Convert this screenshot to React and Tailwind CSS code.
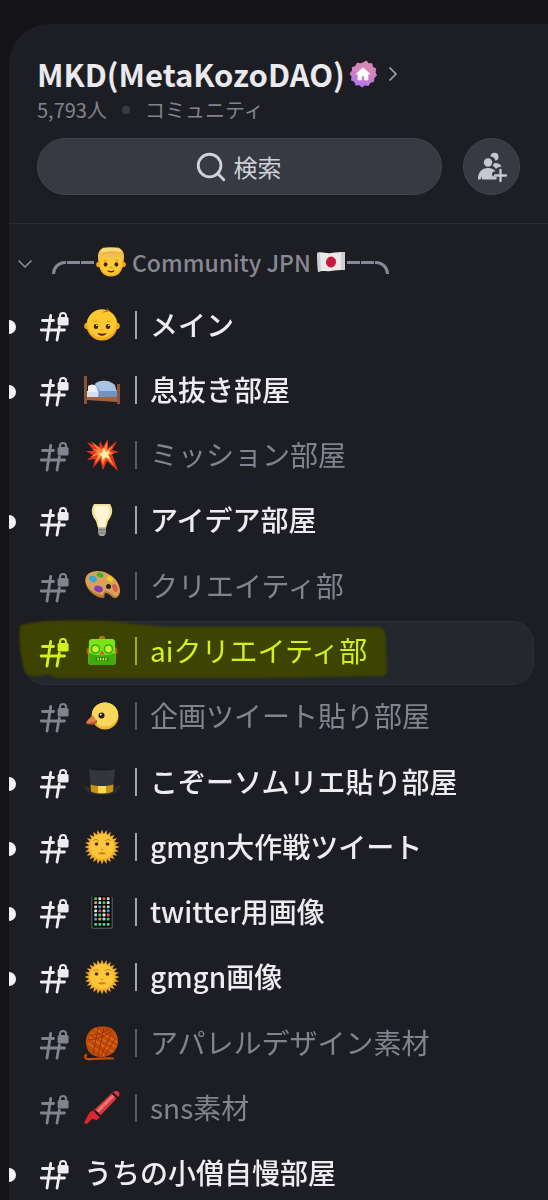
import { ChevronDown, ChevronRight, Search } from "lucide-react";

const ChildEmoji = () => (
  <svg viewBox="0 0 36 36" className="size-[30px] shrink-0" aria-hidden="true">
    <circle cx="3.500" cy="21" r="3.300" fill="#f0a41d" />
    <circle cx="32.500" cy="21" r="3.300" fill="#f0a41d" />
    <path d="M3 18C2 8 4 3 9 1h18c5 2 7 7 6 17-1 11-6 17.500-15 17.500S4 29 3 18z" fill="#f6b127" />
    <path d="M5 16c0-3 1-5 3-6h20c2 1 3 3 3 6 0 11-5 17-13 17S5 27 5 16z" fill="#fecb34" />
    <path d="M3 17C1 8 4 3 9 1h18c5 2 8 7 6 16l-3-5c-7 2-15 2-21-1-2 1-4 3-6 6z" fill="#f3bf4f" />
    <path d="M8 2c6-2 14-2 20 0 2 1 2 3 1 4-7-2-15-1-22 1-1-2-1-4 1-5z" fill="#fbd77c" />
    <path d="M6 9c6-3 16-3 23-1" fill="none" stroke="#e3a53a" strokeWidth=".8" />
    <ellipse cx="11.500" cy="21" rx="2.300" ry="2.600" fill="#3d2411" />
    <ellipse cx="24.500" cy="21" rx="2.300" ry="2.600" fill="#3d2411" />
    <path d="M9.500 16.500l3.500-.8M23 15.700l3.500.8M16.500 24.500h3" stroke="#d18a1c" strokeWidth="1.100" strokeLinecap="round" />
    <path d="M13.500 28c3 1 6 1 9 0-1 3.500-8 3.500-9 0z" fill="#4a1f0c" />
  </svg>
);

const FlagEmoji = () => (
  <svg viewBox="0 0 28 20" className="h-5 w-7 shrink-0" aria-hidden="true">
    <path d="M0 1c5-2 9 1 14 0s9-1 14-1v18c-5 0-9 0-14 1s-9-1-13 1z" fill="#e9e9e9" />
    <path d="M0 1l1 19 3-1L3 0zM24 0h4v18h-4z" fill="#cfcfcf" />
    <ellipse cx="14" cy="10" rx="5" ry="5.500" fill="#c8183f" transform="rotate(15 14 10)" />
  </svg>
);

const BabyEmoji = () => (
  <>
    <circle cx="3.500" cy="19" r="3.300" fill="#f3a51c" />
    <circle cx="32.500" cy="19" r="3.300" fill="#f3a51c" />
    <circle cx="18" cy="18" r="15.500" fill="#f5a91e" />
    <ellipse cx="18" cy="16.500" rx="14.500" ry="14" fill="#fdc92f" />
    <path d="M19 5c4 0 6-2 4-4M21 4c1.500.500 4 .500 4-1" fill="none" stroke="#b5701b" strokeWidth="1" />
    <ellipse cx="12" cy="19.500" rx="2.300" ry="2.500" fill="#3d2411" />
    <ellipse cx="24" cy="19.500" rx="2.300" ry="2.500" fill="#3d2411" />
    <circle cx="12.800" cy="18.500" r=".7" fill="#fff" />
    <circle cx="24.800" cy="18.500" r=".7" fill="#fff" />
    <path d="M9.500 15l3-.6M23.500 14.400l3 .6M16.500 23h3" stroke="#e09a20" strokeWidth="1" strokeLinecap="round" />
    <path d="M13.500 26c3 1 6 1 9 0-1 3.500-8 3.500-9 0z" fill="#4a1f0c" />
  </>
);

const BedEmoji = () => (
  <>
    <path d="M0 4h3v28H0z" fill="#8c5238" />
    <path d="M33 12h3v20h-3z" fill="#8c5238" />
    <path d="M3 24l30 1v5L3 28z" fill="#a2623f" />
    <path d="M3 19h30v6H3z" fill="#d5dde7" />
    <path d="M4 14c3-2 6-2 9 0l1 6H4z" fill="#edf1f5" />
    <path d="M11 12c5-5 15-4 20 1l2 7v5H16z" fill="#9ab5d5" />
    <path d="M11 12l7 7 15 1-3-7c-5-5-13-6-19-1z" fill="#a9c4e2" />
    <path d="M15 19h18v6H14z" fill="#6f94bf" />
  </>
);

const BoomEmoji = () => (
  <>
    <path d="M15 10l1-6 3 6 5-8v9l9-7-5 9 7 2-7 2 6 17-11-10-4 9-3-10-7 8 2-9-8 1 6-5-7-4 8 0L3 5z" fill="#e5341d" />
    <path d="M17 12l3-1 3-6v8l6-4-4 6 5 1-5 2 5 11-8-8-3 7-2-8-6 6 3-8-7 2 6-5-5-3 6 1-7-9z" fill="#ff8a3d" />
    <path d="M20 11l2 4 4-1-2 4 2 4-4-2-4 3v-4l-4-2 4-1z" fill="#fff0a8" />
  </>
);

const BulbEmoji = () => (
  <>
    <path d="M10 2h16c4 6 2 12-2 17l-2 7h-8l-2-7C8 14 6 8 10 2z" fill="#f7e19a" />
    <path d="M12 4h12c3 5 1 10-2 14l-1 7h-6l-1-7c-3-4-5-9-2-14z" fill="#fff6d6" />
    <path d="M14 25.500h8v6l-2 2.500h-4l-2-2.500z" fill="#a7a49a" />
    <path d="M14 28h8M14 31h8" stroke="#706e68" strokeWidth="1" />
  </>
);

const PaletteEmoji = () => (
  <>
    <path d="M4 7C11 1 25 4 32 13c5 7 5 15 0 17-4 1-5-4-10-5-3 0 0 5-3 5C8 29-4 15 4 7z" fill="#b97a35" />
    <path d="M4 6c7-6 21-3 28 6 5 7 5 14 1 16-4 1-6-4-11-5-4 0-1 4-4 4C8 26-4 14 4 6z" fill="#dba05a" />
    <circle cx="24.500" cy="18.500" r="2.500" fill="#24201f" />
    <ellipse cx="9" cy="11" rx="4" ry="3" fill="#38a9d6" transform="rotate(35 9 11)" />
    <ellipse cx="16" cy="7" rx="3.500" ry="2.500" fill="#39b52f" transform="rotate(20 16 7)" />
    <ellipse cx="26" cy="11" rx="3.500" ry="2.500" fill="#f0cf22" transform="rotate(35 26 11)" />
    <ellipse cx="14.500" cy="21" rx="4.500" ry="3.300" fill="#8c3bb5" transform="rotate(20 14.500 21)" />
    <ellipse cx="31" cy="20" rx="2.500" ry="4" fill="#e05a4a" transform="rotate(-20 31 20)" />
  </>
);

const RobotEmoji = () => (
  <>
    <rect x="15" y="3" width="6" height="5" rx="1.500" fill="#a67a00" />
    <rect x="2.500" y="15" width="4" height="6" rx="1.500" fill="#c7481a" />
    <rect x="29.500" y="15" width="4" height="6" rx="1.500" fill="#c7481a" />
    <path d="M5 9c0-2 1-3 3-3h20c2 0 3 1 3 3l1 20c0 2-2 3-3 3H7c-2 0-3-1-3-3z" fill="#7be317" />
    <path d="M5 20c9 3 17 3 26 0l1 10-2 2H6l-2-2z" fill="#43a90e" />
    <circle cx="11.500" cy="16" r="4.800" fill="#2fae17" />
    <circle cx="24.500" cy="16" r="4.800" fill="#2fae17" />
    <circle cx="11.500" cy="16" r="3.200" fill="#c9f52a" />
    <circle cx="24.500" cy="16" r="3.200" fill="#c9f52a" />
    <path d="M18 17l2.500 4.500h-5z" fill="#d8571a" />
    <rect x="11.500" y="24.500" width="13" height="3.600" rx="1.500" fill="#247a09" />
    <path d="M14 25v2.600M16.700 25v2.600M19.400 25v2.600M22 25v2.600" stroke="#d3f04a" strokeWidth="1.400" />
  </>
);

const ChickEmoji = () => (
  <>
    <circle cx="21" cy="18" r="13.500" fill="#edb62f" />
    <ellipse cx="21" cy="16.500" rx="13" ry="12" fill="#f9d65c" />
    <path d="M9 17c-2 2-5 4-7 8 4 2 7 1 11-1z" fill="#dc8543" />
    <path d="M2 25c4 0 8-1 11-3v3c-3 2-8 2-11 0z" fill="#b9602c" />
    <circle cx="17.500" cy="17.500" r="3" fill="#2a1c15" />
    <circle cx="16.800" cy="16.500" r=".9" fill="#fff" />
  </>
);

const HatEmoji = () => (
  <>
    <path d="M0 21c2 4 34 4 36 0 1 5-6 10-18 10S-1 26 0 21z" fill="#2b2d31" />
    <path d="M5 5c6-2 20-2 26 0l-2 20c-6 3-16 3-22 0z" fill="#34363c" />
    <path d="M5 5c6-2.500 20-2.500 26 0-6 2-20 2-26 0z" fill="#1a1b1e" />
    <path d="M6.500 20.500c7 2 16 2 23 0l-.5 7c-6 3-16 3-22 0z" fill="#c9940f" />
    <path d="M14 22h8v7h-8z" fill="#f7da55" />
  </>
);

const rays = Array.from({ length: 24 }, (_, i) => i * 15);

const SunEmoji = () => (
  <>
    {rays.map((angle) => (
      <path key={angle} d="M16 6l2-5.500L20 6z" fill="#f5ae2b" transform={`rotate(${angle} 18 18)`} />
    ))}
    <circle cx="18" cy="18" r="13.500" fill="#f2a51f" />
    <circle cx="18" cy="17.500" r="12.500" fill="#fcc63c" />
    <ellipse cx="12.500" cy="15" rx="1.900" ry="1.700" fill="#5c3414" />
    <ellipse cx="23.500" cy="15" rx="1.900" ry="1.700" fill="#5c3414" />
    <path d="M9 12c2-2 4-2 6 0M21 12c2-2 4-2 6 0M17 20c0 1 2 1 2 0" fill="none" stroke="#c07c1b" strokeWidth="1" />
    <path d="M13.500 24c3-1 6-1 9 0-3 2-6 2-9 0z" fill="#d9761c" />
  </>
);

const apps = ["#4ec35b", "#3ba7f0", "#e8e8e8", "#f0a13a", "#e25b4b", "#9ad8e8", "#d7d7d7"];

const PhoneEmoji = () => (
  <>
    <rect x="7" y="2" width="22" height="33" rx="2.500" fill="#4b4e51" />
    <rect x="8.500" y="2" width="19" height="31.500" rx="1.500" fill="#050506" />
    {[0, 1, 2, 3, 4, 5, 6].map((row) =>
      [0, 1, 2, 3].map((col) => (
        <rect
          key={`${row}-${col}`}
          x={10.2 + col * 4.2}
          y={row === 6 ? 29 : 3.2 + row * 4.1}
          width="2.800"
          height="2.800"
          rx=".6"
          fill={row === 6 ? "#54cf8b" : apps[(row * 3 + col * 2) % 7]}
        />
      )),
    )}
  </>
);

const YarnEmoji = () => (
  <>
    <path d="M2 30c-3 4 2 4.500 7 4s13-1 20-.5" fill="none" stroke="#c94d08" strokeWidth="2.200" strokeLinecap="round" />
    <path d="M10 3c5-2 12-2 17 0 7 4 9 14 5 21-5 9-20 11-27 3C-1 18 2 7 10 3z" fill="#c24a08" />
    <path d="M7 8l25 14M11 4l22 13M5 12l24 15M4 18l17 13" stroke="#e0641a" strokeWidth="1.500" />
    <path d="M6 10c9 0 15-3 20-7M4 15c10-1 20-5 25-10M14 3L9 29M20 3l-6 28M31 14L21 31M27 9L17 31" fill="none" stroke="#8f3606" strokeWidth="1" />
  </>
);

const CrayonEmoji = () => (
  <>
    <path d="M29 2c3-2 8-1 6 4L14 28l-6-6z" fill="#d8393f" />
    <path d="M28 5L10 23l2 2L31 6z" fill="#ee7577" />
    <path d="M11 20l6 6-4 4-5-1-5 5-3-1 4-8 2-3z" fill="#d9252d" />
    <path d="M10.500 20.500l6 6M28.500 3l5.500 5.500" stroke="#1c1113" strokeWidth="2" />
  </>
);

const channels = [
  { name: "｜メイン", Emoji: BabyEmoji, unread: true },
  { name: "｜息抜き部屋", Emoji: BedEmoji, unread: true },
  { name: "｜ミッション部屋", Emoji: BoomEmoji },
  { name: "｜アイデア部屋", Emoji: BulbEmoji, unread: true },
  { name: "｜クリエイティ部", Emoji: PaletteEmoji },
  { name: "｜aiクリエイティ部", Emoji: RobotEmoji, selected: true },
  { name: "｜企画ツイート貼り部屋", Emoji: ChickEmoji },
  { name: "｜こぞーソムリエ貼り部屋", Emoji: HatEmoji, unread: true },
  { name: "｜gmgn大作戦ツイート", Emoji: SunEmoji, unread: true },
  { name: "｜twitter用画像", Emoji: PhoneEmoji, unread: true },
  { name: "｜gmgn画像", Emoji: SunEmoji, unread: true },
  { name: "｜アパレルデザイン素材", Emoji: YarnEmoji },
  { name: "｜sns素材", Emoji: CrayonEmoji },
  { name: "うちの小僧自慢部屋", unread: true },
];

const HashLock = () => (
  <svg viewBox="0 0 28 28" className="size-7 shrink-0 overflow-visible" aria-hidden="true">
    <path
      d="M2.500 7.500H13.500M1.200 17h23.300M10.700 2.500L7 27M19.300 14L17 27"
      fill="none"
      stroke="currentColor"
      strokeWidth="2.800"
      strokeLinecap="round"
    />
    <rect x="17.600" y="4" width="11" height="8.600" rx="1.600" fill="currentColor" />
    <path d="M20 5V3a3 3 0 0 1 6 0v2" fill="none" stroke="currentColor" strokeWidth="2" />
  </svg>
);

// hand-drawn highlighter stroke behind the selected channel
const Marker = () => (
  <svg
    viewBox="0 0 370 60"
    preserveAspectRatio="none"
    className="absolute -top-0.5 -left-1.5 h-15 w-[370px] blur-[1px]"
    aria-hidden="true"
  >
    <path
      d="M3 5C20 0 60 0 90 1c25 2 40 5 62 6l208 0c6 0 8 5 8 14l1 29c0 6-3 6-9 6l-118 2H40c-8 0-8-5-14-3-8 3-18 2-20-6C3 38-1 10 3 5z"
      fill="#3d4300"
    />
  </svg>
);

const Channel = ({ name, Emoji, unread, selected }) => {
  const color = selected ? "text-[#d3f01a]" : unread ? "font-medium text-[#ececf1]" : "text-[#82838f]";
  return (
    <li className="flex items-center">
      <span className={`h-3.5 w-[7px] shrink-0 rounded-r-full ${unread ? "bg-[#f4f4f7]" : ""}`} />
      <a
        href="#"
        aria-current={selected ? "page" : undefined}
        className={`relative mr-3.5 ml-[7px] flex h-16 min-w-0 flex-1 items-center rounded-[22px] border pl-4 ${
          selected ? "border-[#2e3038] bg-[#25272f]" : "border-transparent"
        } ${color}`}
      >
        {selected && <Marker />}
        <span className="relative flex items-center gap-4">
          <HashLock />
          <span className="flex items-center gap-0.5 pb-1.5 text-[28px] leading-10 whitespace-nowrap">
            {Emoji && (
              <svg viewBox="0 0 36 36" className="mt-0.5 size-9 shrink-0" aria-hidden="true">
                <Emoji />
              </svg>
            )}
            <span>{name}</span>
          </span>
        </span>
      </a>
    </li>
  );
};

const ServerBadge = () => (
  <svg viewBox="0 0 28 28" className="size-7 shrink-0" aria-hidden="true">
    <defs>
      <linearGradient id="badge" gradientUnits="userSpaceOnUse" x1="8" y1="28" x2="18" y2="0">
        <stop offset="0" stopColor="#b070f5" />
        <stop offset="0.600" stopColor="#d583bd" />
        <stop offset="1" stopColor="#dc87b4" />
      </linearGradient>
    </defs>
    <path
      d="M14 2.400L17.200.600 19.700 3.300 23.200 3.300 24 7 27.300 8.500 26.500 12.200 28 15.500 25.300 18 25 21.700 21.500 22.800 19.500 26 16 25.400 13 27.600 10.300 25.300 6.600 25.400 5.400 22 2 20.300 2.600 16.700 .500 13.600 2.900 10.800 2.900 7.200 6.300 5.900 8 2.700 11.500 3.200z"
      fill="url(#badge)"
    />
    <path d="M14 7.500l7 6.500h-2v6h-3.500v-4h-3v4H9v-6H7z" fill="#fff" stroke="#fff" strokeWidth=".6" strokeLinejoin="round" />
  </svg>
);

const InviteIcon = () => (
  <svg viewBox="0 0 30 30" className="size-[30px]" fill="currentColor" aria-hidden="true">
    <path d="M13.500 4.500a4 4 0 1 1 5 4.200 5.500 5.500 0 0 0-5-4.200z" />
    <path d="M17.500 11c4 0 6 1.500 7 3.500l-2.500.5c-1.500.5-2 1-3 2-1-1.500-2-2.500-3.500-3.500z" />
    <circle cx="11" cy="10.500" r="4.200" />
    <path d="M1 27.500c0-7.500 4-11.500 10-11.500 4 0 6 1.500 7.500 3.500h-1a2.500 2.500 0 0 0 0 5h2v3H5l-.5-3-1 3z" />
    <path d="M23.500 18v11M18 23.500h11" stroke="currentColor" strokeWidth="2.400" strokeLinecap="round" />
  </svg>
);

const Header = () => (
  <header className="border-b border-[#2b2c32] px-7 pt-8 pb-7">
    <button type="button" className="flex items-center gap-1 text-[#e9e9ee]">
      <h1 className="text-[31px] leading-9 font-bold whitespace-nowrap">MKD(MetaKozoDAO)</h1>
      <ServerBadge />
      <ChevronRight className="size-6 text-[#a5a6b0]" strokeWidth={1.75} />
    </button>
    <p className="mt-1 flex items-center gap-[15px] text-xl leading-7 text-[#82838f]">
      <span>5,793人</span>
      <span className="size-2 rounded-full bg-[#3b3c42]" />
      <span>コミュニティ</span>
    </p>
    <div className="mt-3.5 flex items-center gap-[21px]">
      <button
        type="button"
        className="flex h-[57px] flex-1 items-center justify-center gap-1.5 rounded-full border border-[#43454e] bg-[#383a43] pr-1 text-2xl text-[#d0d1d8]"
      >
        <Search className="size-[34px]" strokeWidth={2} />
        <span>検索</span>
      </button>
      <button
        type="button"
        aria-label="招待"
        className="flex size-[57px] items-center justify-center rounded-full border border-[#43454e] bg-[#383a43] text-[#c6c7cf]"
      >
        <InviteIcon />
      </button>
    </div>
  </header>
);

const Dashes = () => (
  <>
    <span className="h-[3px] w-[13px] bg-current" />
    <span className="h-[3px] w-[13px] bg-current" />
  </>
);

const Category = () => (
  <button type="button" className="flex h-12 items-center pl-1 text-[#878894]">
    <ChevronDown className="mt-1 mr-[15px] size-6" strokeWidth={1.75} />
    <span className="flex items-center text-[23px] leading-9 font-medium whitespace-nowrap">
      <span className="flex items-center gap-px">
        <span className="mt-2.5 h-[13px] w-3.5 rounded-tl-full border-t-[3px] border-l-[3px]" />
        <Dashes />
      </span>
      <span className="flex items-center gap-1.5 px-0.5">
        <ChildEmoji />
        <span>Community JPN</span>
        <FlagEmoji />
      </span>
      <span className="flex items-center gap-px">
        <Dashes />
        <span className="mt-2.5 h-[13px] w-3.5 rounded-tr-full border-t-[3px] border-r-[3px]" />
      </span>
    </span>
  </button>
);

export default function App() {
  return (
    <div className="flex min-h-screen overflow-hidden bg-[#131318] pt-6 pl-[9px] font-['Noto_Sans_CJK_JP',sans-serif]">
      <div className="flex min-w-0 flex-1 flex-col rounded-tl-[40px] bg-[#1d1e23]">
        <Header />
        <nav className="flex flex-1 flex-col gap-2 pt-3.5">
          <Category />
          <ul className="-mb-2 grid flex-1 auto-rows-fr will-change-transform">
            {channels.map((channel) => (
              <Channel key={channel.name} {...channel} />
            ))}
          </ul>
        </nav>
      </div>
    </div>
  );
}
